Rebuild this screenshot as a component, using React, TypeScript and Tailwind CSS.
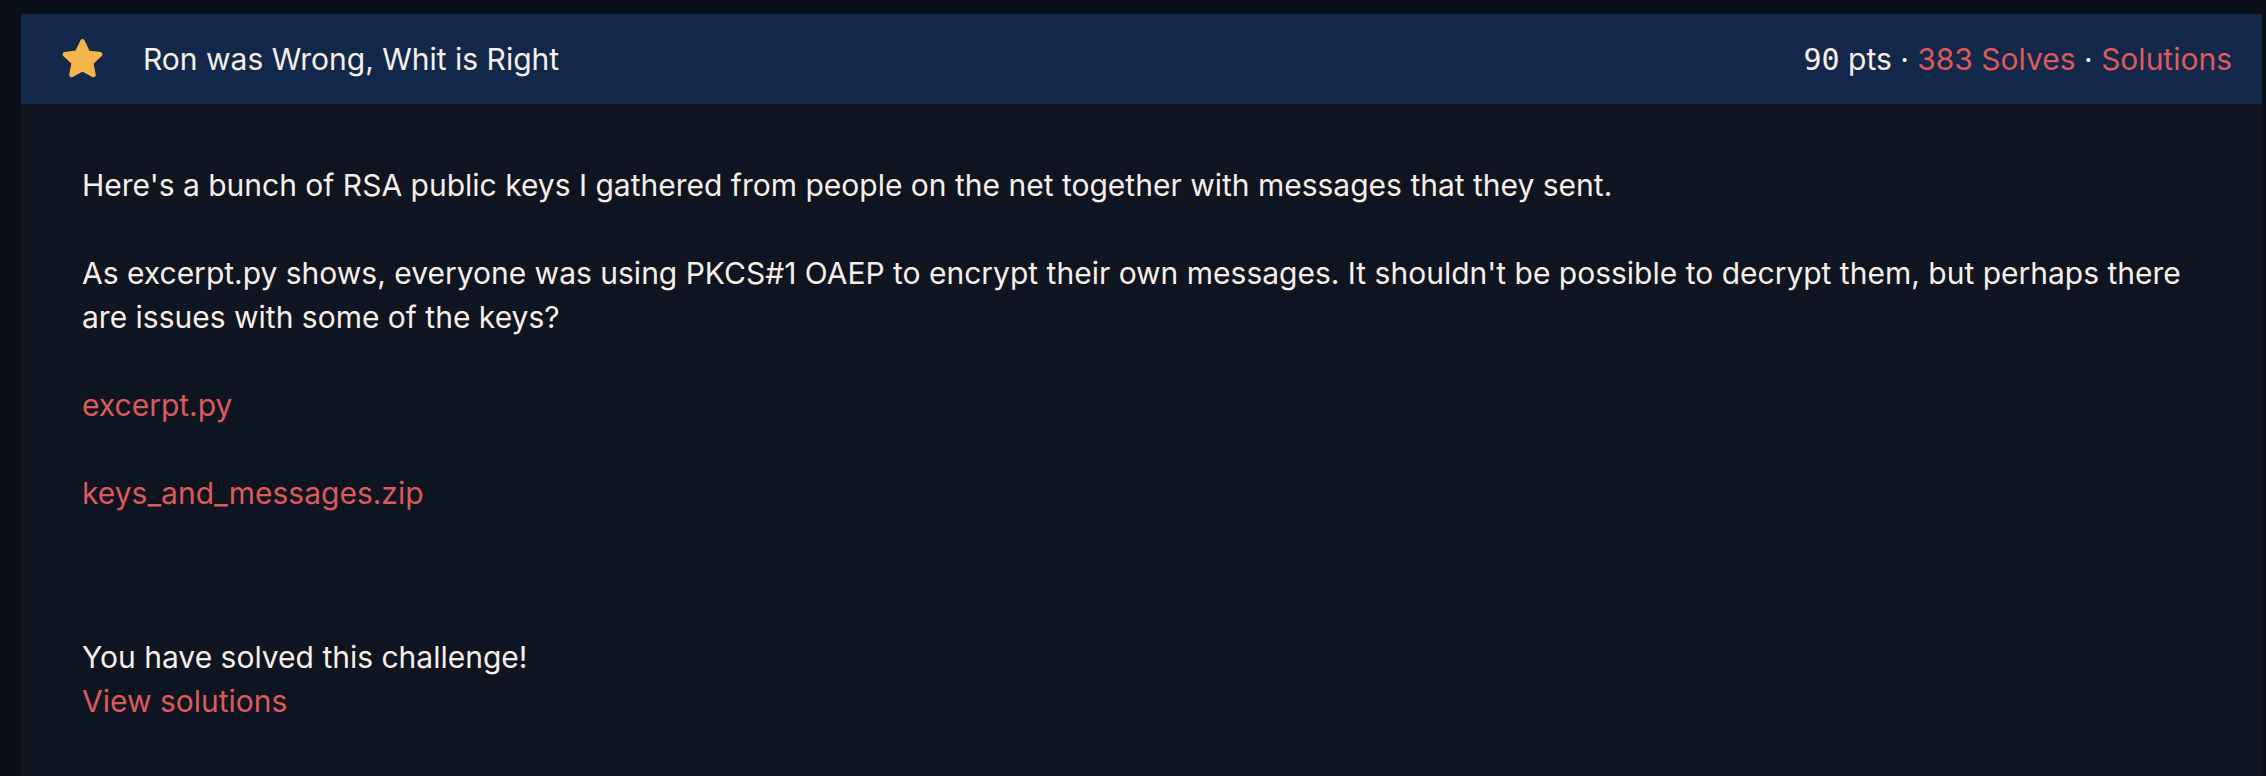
import React from "react";

function Star() {
  return (
    <svg width="47" height="47" viewBox="0 0 24 24" className="shrink-0">
      <polygon
        points="12,2.8 14.75,8.6 21,9.35 16.4,13.7 17.6,19.9 12,16.85 6.4,19.9 7.6,13.7 3,9.35 9.25,8.6"
        fill="#f4b54a"
        stroke="#f4b54a"
        strokeWidth="2.4"
        strokeLinejoin="round"
      />
    </svg>
  );
}

export default function App() {
  return (
    <div
      className="w-[2266px] h-[776px] bg-[#0a0e17] overflow-hidden pl-[21px] pr-[4px] pt-[14px]"
      style={{ fontFamily: "Inter, 'Noto Sans', sans-serif" }}
    >
      <div className="bg-[#0f1421] h-full flex flex-col">
        <div className="h-[90px] bg-[#12284a] flex items-center pl-[38px] pr-[30px]">
          <Star />
          <div className="ml-[37px] text-[30px] text-[#f8efe8]">Ron was Wrong, Whit is Right</div>
          <div className="ml-auto text-[30px] text-[#f8efe8] flex items-center">
            <span style={{ fontFamily: "'DejaVu Sans Mono', monospace" }} className="text-[30px]">90</span>
            <span>&nbsp;pts&nbsp;·&nbsp;</span>
            <span className="text-[#dc5a5a]">383 Solves</span>
            <span>&nbsp;·&nbsp;</span>
            <span className="text-[#dc5a5a]">Solutions</span>
          </div>
        </div>
        <div className="pl-[61px] pr-[61px] pt-[59px] text-[30px] leading-[44px] text-[#f8efe8]">
          <p>Here's a bunch of RSA public keys I gathered from people on the net together with messages that they sent.</p>
          <p className="mt-[44px]">
            As excerpt.py shows, everyone was using PKCS#1 OAEP to encrypt their own messages. It shouldn't be possible to decrypt them, but perhaps there are issues with some of the keys?
          </p>
          <p className="mt-[44px] text-[#dc5a5a]">excerpt.py</p>
          <p className="mt-[44px] text-[#dc5a5a]">keys_and_messages.zip</p>
          <p className="mt-[120px]">You have solved this challenge!</p>
          <p className="text-[#dc5a5a]">View solutions</p>
        </div>
      </div>
    </div>
  );
}
